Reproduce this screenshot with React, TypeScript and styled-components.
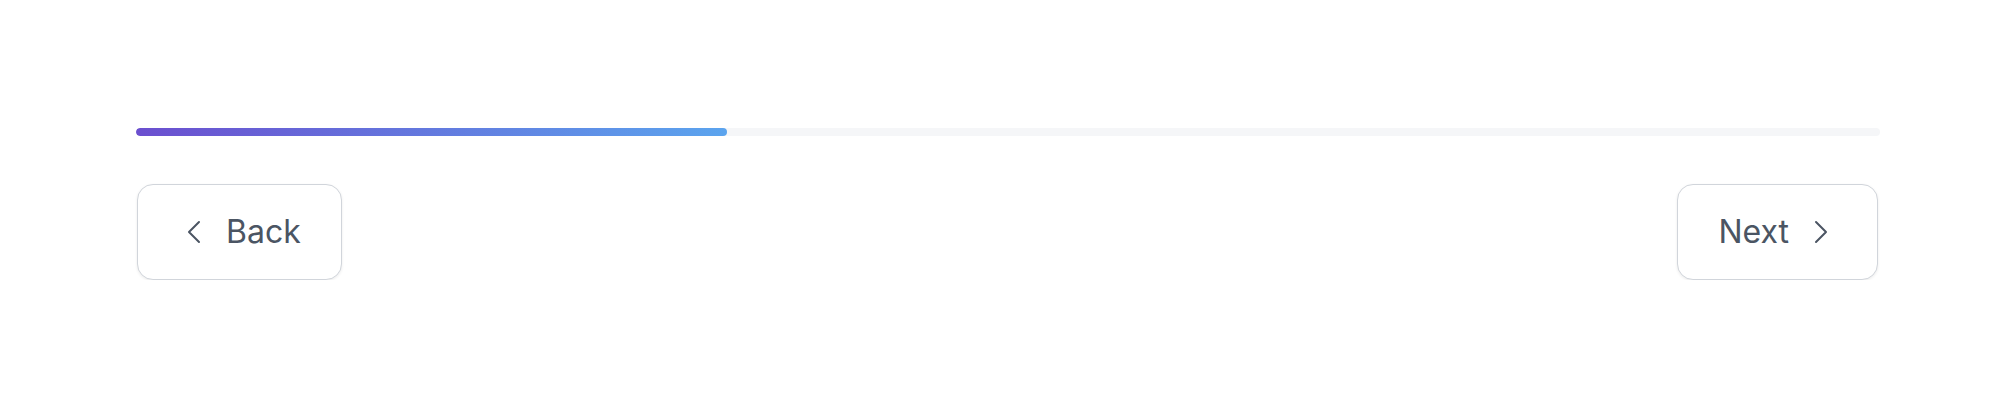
import styled, { createGlobalStyle } from "styled-components";

const GlobalStyle = createGlobalStyle`
  html, body {
    margin: 0;
    padding: 0;
    background: #ffffff;
    font-family: Inter, "Noto Sans", sans-serif;
  }
`;

const Page = styled.div`
  padding: 128px 134px 0 136px;
`;

const Track = styled.div`
  height: 8px;
  border-radius: 9999px;
  background: #f5f6f8;
  overflow: hidden;
`;

const Fill = styled.div`
  height: 100%;
  border-radius: 9999px;
  background: linear-gradient(90deg, #6b4fcf 0%, #5ba4ee 100%);
`;

const Actions = styled.div`
  display: flex;
  justify-content: space-between;
  align-items: center;
  margin: 48px 2px 0 1px;
`;

const NavButton = styled.button`
  display: inline-flex;
  align-items: center;
  gap: 16px;
  height: 96px;
  padding: 0 40px;
  border: 1px solid #d1d5db;
  border-radius: 16px;
  background: #ffffff;
  box-shadow: 0 1px 3px rgba(0, 0, 0, 0.08);
  color: #4b5563;
  font-family: Inter, "Noto Sans", sans-serif;
  font-size: 32px;
  font-weight: 400;
  line-height: 48px;
  cursor: pointer;
`;

const Chevron = ({ dir }: { dir: "left" | "right" }) => (
  <svg width="32" height="32" viewBox="0 0 24 24" fill="none" stroke="currentColor" strokeWidth={1.5}>
    <path
      strokeLinecap="round"
      strokeLinejoin="round"
      d={dir === "left" ? "M15.75 19.5 8.25 12l7.5-7.5" : "m8.25 4.5 7.5 7.5-7.5 7.5"}
    />
  </svg>
);

export default function App() {
  const progress = 33.9;
  return (
    <Page>
      <GlobalStyle />
      <Track>
        <Fill style={{ width: `${progress}%` }} />
      </Track>
      <Actions>
        <NavButton>
          <Chevron dir="left" />
          Back
        </NavButton>
        <NavButton>
          Next
          <Chevron dir="right" />
        </NavButton>
      </Actions>
    </Page>
  );
}
